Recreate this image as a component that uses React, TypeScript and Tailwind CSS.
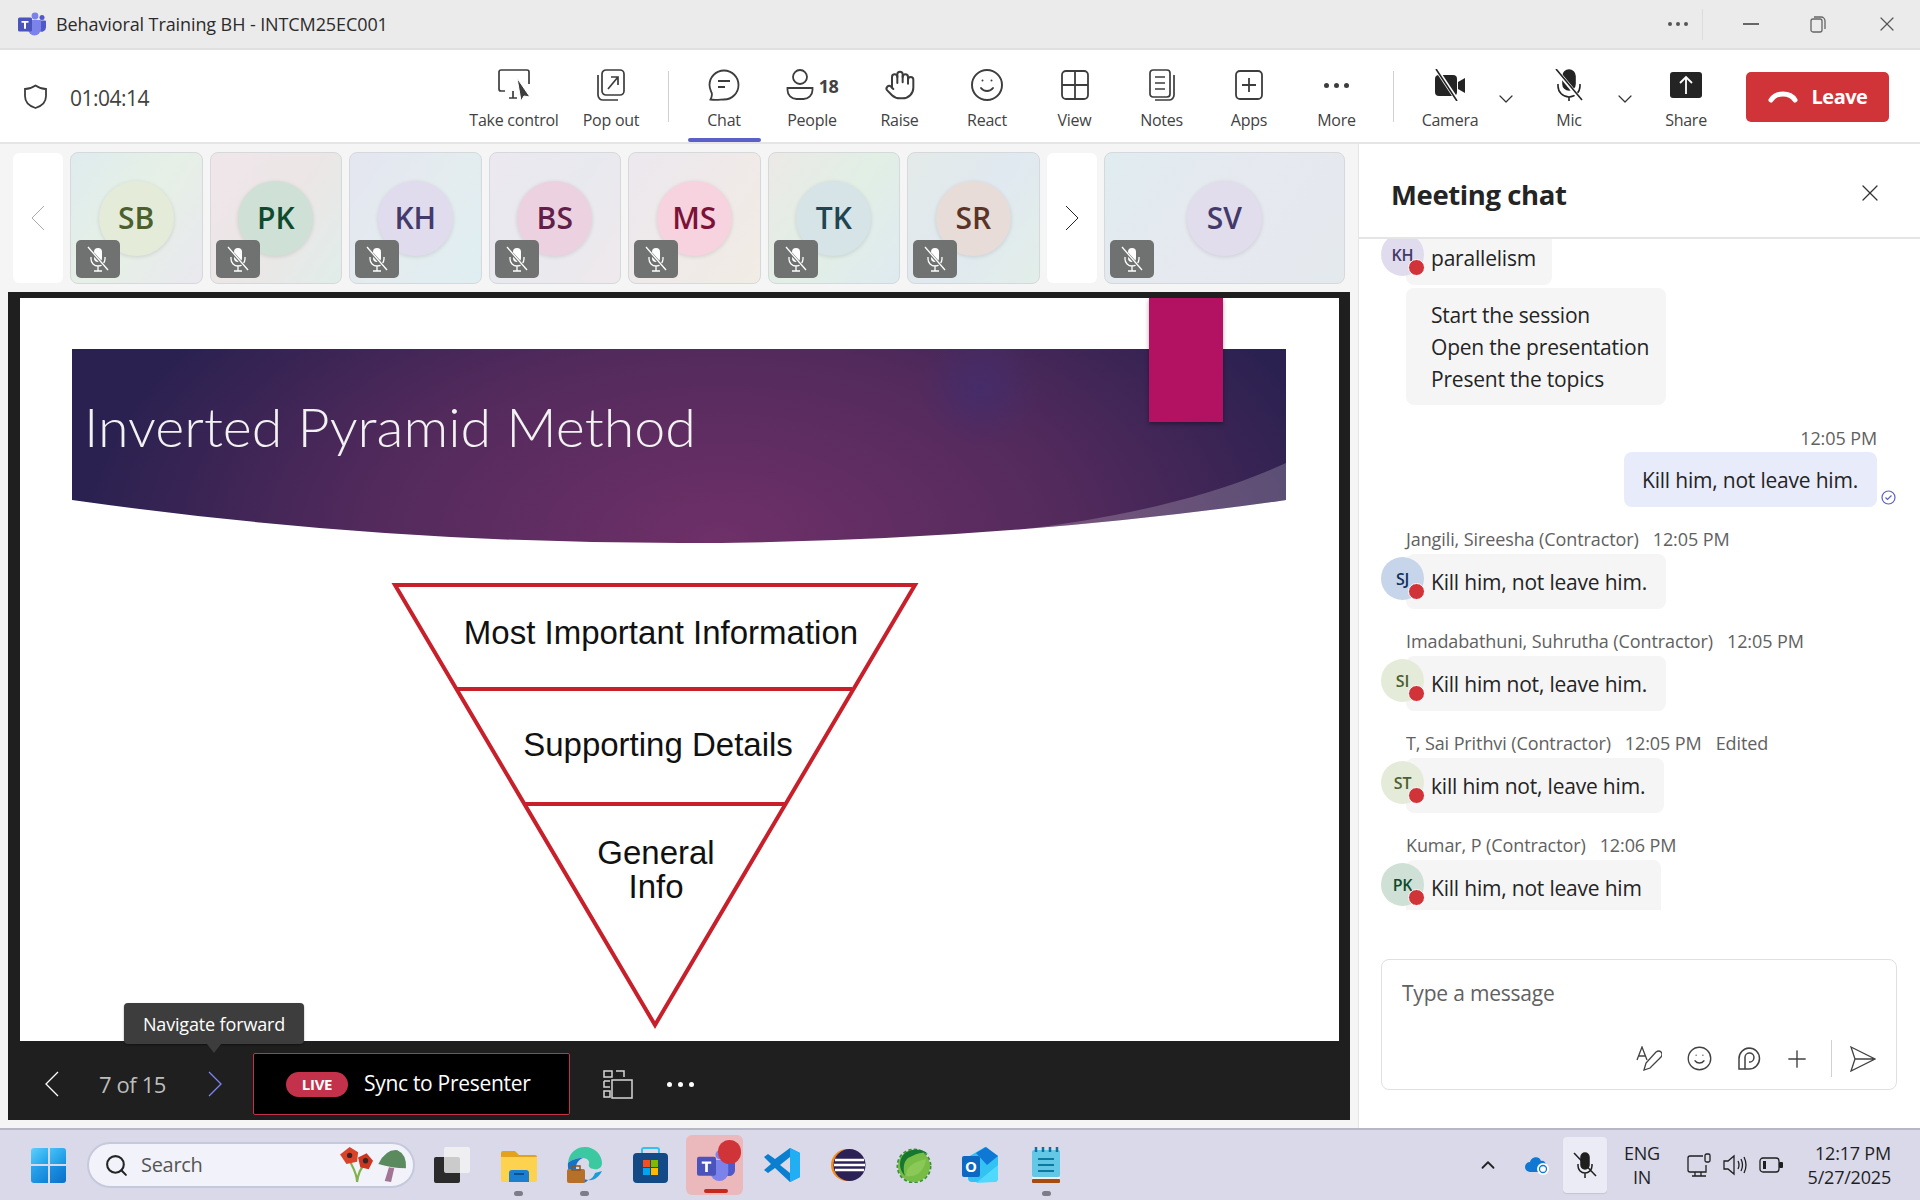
import React from "react";
import { Hand, Smile, X, ChevronDown, Search, ChevronUp, Plus } from "lucide-react";

const stroke = "#3d3d3d";

function Chevron({ dir, color, sw, className }: { dir: "left" | "right"; color: string; sw: number; className?: string }) {
  return (
    <svg className={className} width="14" height="26" viewBox="0 0 14 26" fill="none" stroke={color} strokeWidth={sw}>
      <path d={dir === "left" ? "M13 1L1 13l12 12" : "M1 1l12 12L1 25"} />
    </svg>
  );
}

function MuteIcon() {
  return (
    <svg width="24" height="26" viewBox="0 0 24 26" fill="none" stroke="#fff" strokeWidth="1.3">
      <rect x="8" y="2" width="8" height="14" rx="4" fill="#fff" stroke="none" />
      <path d="M5 11v2a7 7 0 0 0 14 0v-2M12 20v5M8 25h8" />
      <path d="M2 2l20 22" stroke="#6f7271" strokeWidth="3" />
      <path d="M2 1l20 23" />
    </svg>
  );
}

function Tile({ initials, bg, fg, avatar, wide }: { initials: string; bg: string; fg: string; avatar: string; wide?: boolean }) {
  return (
    <div className={`relative flex h-[132px] shrink-0 items-center justify-center rounded-[8px] border border-[#d6d9dc] ${wide ? "w-[241.5px]" : "w-[132.5px]"} ${bg}`}>
      <div className={`flex h-[75px] w-[75px] items-center justify-center rounded-full text-[30px] font-semibold leading-none shadow-[0_1px_4px_rgba(0,0,0,0.12)] ${avatar} ${fg}`}>
        {initials}
      </div>
      <div className="absolute bottom-[5px] left-[5px] flex h-[38px] w-[44px] items-center justify-center rounded-[5px] bg-[#6f7271]">
        <MuteIcon />
      </div>
    </div>
  );
}

function ToolButton({ label, width, children }: { label: string; width: string; children: React.ReactNode }) {
  return (
    <div className={`flex h-[92px] shrink-0 flex-col items-center ${width}`}>
      <div className="mt-[19px] flex h-[32px] items-center justify-center">{children}</div>
      <span className="mt-[8px] whitespace-nowrap text-[16px] leading-[22px] tracking-[-0.25px] text-[#424242]">{label}</span>
    </div>
  );
}

function Chat({ name, time, edited, initials, avatar, fg, width, children }: { name?: string; time?: string; edited?: boolean; initials?: string; avatar?: string; fg?: string; width: string; children: React.ReactNode }) {
  return (
    <div>
      {name && (
        <div className="mb-[3px] mt-[20px] flex h-[24px] items-center gap-[14px] whitespace-nowrap text-[18px] tracking-[-0.1px] text-[#616161]">
          <span>{name}</span>
          <span>{time}</span>
          {edited && <span>Edited</span>}
        </div>
      )}
      <div className={`relative rounded-[8px] bg-[#f5f5f5] py-[11.5px] pl-[25px] text-[21px] leading-[32px] tracking-[-0.2px] text-[#242424] ${width}`}>
        {initials && (
          <div className={`absolute -left-[25px] top-[3px] flex h-[43px] w-[43px] items-center justify-center rounded-full text-[16px] font-semibold ${avatar} ${fg}`}>
            {initials}
            <span className="absolute bottom-0 right-[-1px] h-[17px] w-[17px] rounded-full border border-white bg-[#d13438]" />
          </div>
        )}
        {children}
      </div>
    </div>
  );
}

function Slide() {
  return (
    <svg className="block h-[743px] w-[1319px]" viewBox="0 0 1319 743">
      <defs>
        <radialGradient id="banner" gradientUnits="userSpaceOnUse" cx="700" cy="440" r="640" gradientTransform="translate(0 0) scale(1 0.55)">
          <stop offset="0" stopColor="#6e3068" />
          <stop offset="0.55" stopColor="#532a5c" />
          <stop offset="1" stopColor="#2a2150" />
        </radialGradient>
        <radialGradient id="spot" cx="0.5" cy="0.5" r="0.5">
          <stop offset="0" stopColor="#452c69" />
          <stop offset="1" stopColor="#452c69" stopOpacity="0" />
        </radialGradient>
        <clipPath id="bannerClip">
          <path d="M52 51H1266V202Q659 288 52 202Z" />
        </clipPath>
      </defs>
      <path d="M52 51H1266V202Q659 288 52 202Z" fill="url(#banner)" />
      <g clipPath="url(#bannerClip)">
        <ellipse cx="960" cy="89" rx="60" ry="60" fill="url(#spot)" />
        <path d="M1266 165C1180 205 1060 228 944 237L960 290H1266Z" fill="#fff" fillOpacity="0.2" />
      </g>
      <rect x="1129" y="0" width="74" height="124" fill="#b31263" style={{ filter: "drop-shadow(0 2px 2px rgba(0,0,0,0.35))" }} />
      <text x="64" y="149" fontFamily="Lato, sans-serif" fontWeight="300" fontSize="54" fill="#f2f2f2" textLength="612" lengthAdjust="spacingAndGlyphs">Inverted Pyramid Method</text>
      <g fill="none" stroke="#c8202b" strokeWidth="4">
        <path d="M375 287H895L635 727Z" />
        <path d="M437 391H832M505 506H765" />
      </g>
      <g fontFamily="Liberation Sans, Arial, sans-serif" fontSize="33" fill="#111" textAnchor="middle">
        <text x="641" y="346">Most Important Information</text>
        <text x="638" y="458">Supporting Details</text>
        <text x="636" y="566">General</text>
        <text x="636" y="600">Info</text>
      </g>
    </svg>
  );
}

function Poppy() {
  return (
    <svg width="68" height="40" viewBox="0 0 64 36">
      <path d="M17 34C17 26 13 20 10 14M17 34C18 26 21 20 25 16" stroke="#7fb24a" strokeWidth="2" fill="none" />
      <path d="M1 8L10 1L18 6L17 15L7 17Z" fill="#d9432a" />
      <path d="M18 11L26 7L32 14L28 22L20 20Z" fill="#cc3522" />
      <circle cx="10" cy="9" r="2.5" fill="#3a2420" />
      <circle cx="25" cy="14" r="2.5" fill="#3a2420" />
      <path d="M37 17Q44 3 55 4Q64 8 63 21Q50 21 37 17Z" fill="#5b8a5e" />
      <path d="M47 20L43 33L49 34L52 21Z" fill="#a27594" />
    </svg>
  );
}

function TeamsLogo({ size, height }: { size: number; height: number }) {
  return (
    <svg width={size} height={height} viewBox="0 0 28 24">
      <circle cx="17" cy="4" r="3.4" fill="#7b83eb" />
      <circle cx="24" cy="5.4" r="2.5" fill="#5059c9" />
      <path d="M21 8.5h6a1 1 0 0 1 1 1v6a4.5 4.5 0 0 1-7 3.5z" fill="#5059c9" />
      <path d="M10 8h12a1 1 0 0 1 1 1v8a6.5 6.5 0 0 1-13 0z" fill="#7b83eb" />
      <rect x="0" y="5.5" width="14" height="14" rx="1.5" fill="#4b53bc" />
      <path d="M3.5 9h7v1.8H8v6H6v-6H3.5z" fill="#fff" />
    </svg>
  );
}

function Cell({ dot, children }: { dot?: boolean; children: React.ReactNode }) {
  return (
    <div className="relative flex h-[60px] w-[66px] shrink-0 items-center justify-center">
      {children}
      {dot && <span className="absolute bottom-[-1px] h-[5px] w-[9px] rounded-full bg-[#7d7d8a]" />}
    </div>
  );
}

export default function App() {
  return (
    <div className="flex h-[1200px] w-[1920px] flex-col overflow-hidden bg-white font-['Open_Sans',sans-serif] text-[#242424]">
      {/* title bar */}
      <div className="flex h-[50px] shrink-0 items-center border-b-2 border-[#e0e0e0] bg-[#ebebeb] pl-[18px]">
        <TeamsLogo size={28} height={24} />
        <span className="ml-[10px] text-[18px] tracking-[-0.1px] text-[#2b2b2b]">Behavioral Training BH - INTCM25EC001</span>
        <div className="ml-auto flex items-center">
          <span className="flex gap-[4px]">
            <i className="h-[4px] w-[4px] rounded-full bg-[#555]" />
            <i className="h-[4px] w-[4px] rounded-full bg-[#555]" />
            <i className="h-[4px] w-[4px] rounded-full bg-[#555]" />
          </span>
          <span className="ml-[14px] h-[31px] w-px bg-[#dcdcdc]" />
          <span className="ml-[40px] h-[2px] w-[16px] bg-[#666]" />
          <svg className="ml-[51px]" width="16" height="18" viewBox="0 0 16 18" fill="none" stroke="#666" strokeWidth="1.3">
            <rect x="1" y="4" width="11" height="13" rx="2" />
            <path d="M4 2h7a4 4 0 0 1 4 4v8" />
          </svg>
          <X className="ml-[49px] mr-[21px]" size={24} strokeWidth={1.2} color="#555" />
        </div>
      </div>

      {/* toolbar */}
      <div className="flex h-[94px] shrink-0 items-start border-b-2 border-[#e5e5e5] bg-white">
        <div className="flex h-[92px] w-[464px] shrink-0 items-center pl-[23px]">
          <svg width="25" height="25" viewBox="0 0 25 25" fill="none" stroke="#3d3d3d" strokeWidth="1.8">
            <path d="M12.5 1.5C9 4 6 5 2 5v7c0 6 4 10 10.500 12 6.500-2 10.500-6 10.500-12V5c-4 0-7-1-10.500-3.500z" />
          </svg>
          <span className="ml-[22px] mt-[5px] text-[21px] tracking-[-0.5px] text-[#424242]">01:04:14</span>
        </div>
        <ToolButton label="Take control" width="w-[100px]">
          <svg width="34" height="32" viewBox="0 0 34 32" fill="none" stroke={stroke} strokeWidth="1.7">
            <path d="M8 22H4a2 2 0 0 1-2-2V3a2 2 0 0 1 2-2h26a2 2 0 0 1 2 2v12" />
            <path d="M12 29h8M16 22v7" />
            <path d="M20 9l13 19-6-1-3 5z" fill={stroke} stroke="#fff" strokeWidth="1" />
          </svg>
        </ToolButton>
        <ToolButton label="Pop out" width="w-[94px]">
          <svg width="28" height="32" viewBox="0 0 28 32" fill="none" stroke={stroke} strokeWidth="1.7">
            <rect x="5" y="1" width="22" height="25" rx="4" />
            <path d="M1 6v20a5 5 0 0 0 5 5h15" />
            <path d="M11 20L21 8M14 8h7v8" />
          </svg>
        </ToolButton>
        <span className="ml-[10px] mr-[11px] mt-[21px] h-[51px] w-px shrink-0 bg-[#d1d1d1]" />
        <div className="relative">
          <ToolButton label="Chat" width="w-[88px]">
            <svg width="32" height="32" viewBox="0 0 32 32" fill="none" stroke={stroke} strokeWidth="1.8">
              <path d="M16 1.500c8 0 14.500 6.500 14.500 14.500S24 30.500 16 30.500c-3 0-9 1-13.500 0 1.500-3 2-5 1-7C2.500 21 1.500 19 1.500 16 1.500 8 8 1.500 16 1.500z" />
              <path d="M10 12h12M10 18h7" />
            </svg>
          </ToolButton>
          <span className="absolute bottom-[0px] left-[8px] h-[4px] w-[73px] rounded-full bg-[#5b5fc7]" />
        </div>
        <ToolButton label="People" width="w-[88px]">
          <div className="flex items-center">
            <svg width="28" height="32" viewBox="0 0 28 32" fill="none" stroke={stroke} strokeWidth="1.8">
              <circle cx="14" cy="8" r="7" />
              <path d="M1.500 19h25v2a9 9 0 0 1-9 9h-7a9 9 0 0 1-9-9z" />
            </svg>
            <span className="ml-[5px] mt-[2px] text-[18px] font-bold tracking-[-0.5px] text-[#424242]">18</span>
          </div>
        </ToolButton>
        <ToolButton label="Raise" width="w-[87px]">
          <Hand size={32} strokeWidth={1.5} color={stroke} />
        </ToolButton>
        <ToolButton label="React" width="w-[88px]">
          <Smile size={36} strokeWidth={1.3} color={stroke} />
        </ToolButton>
        <ToolButton label="View" width="w-[87px]">
          <svg width="28" height="30" viewBox="0 0 28 30" fill="none" stroke={stroke} strokeWidth="1.8">
            <rect x="1" y="1" width="26" height="28" rx="4" />
            <path d="M14 1v28M1 15h26" />
          </svg>
        </ToolButton>
        <ToolButton label="Notes" width="w-[87px]">
          <svg width="26" height="32" viewBox="0 0 26 32" fill="none" stroke={stroke} strokeWidth="1.700">
            <rect x="1" y="1" width="20" height="27" rx="3" />
            <path d="M6 8h10M6 14h10M6 20h10" />
            <path d="M25 6v20a5 5 0 0 1-5 5H6" />
          </svg>
        </ToolButton>
        <ToolButton label="Apps" width="w-[88px]">
          <svg width="28" height="30" viewBox="0 0 28 30" fill="none" stroke={stroke} strokeWidth="1.8">
            <rect x="1" y="1" width="26" height="28" rx="4" />
            <path d="M14 8v14M7 15h14" />
          </svg>
        </ToolButton>
        <ToolButton label="More" width="w-[87px]">
          <span className="flex gap-[5px]">
            <i className="h-[5px] w-[5px] rounded-full bg-[#3d3d3d]" />
            <i className="h-[5px] w-[5px] rounded-full bg-[#3d3d3d]" />
            <i className="h-[5px] w-[5px] rounded-full bg-[#3d3d3d]" />
          </span>
        </ToolButton>
        <span className="ml-[13px] mt-[21px] h-[51px] w-px shrink-0 bg-[#d1d1d1]" />
        <ToolButton label="Camera" width="w-[112px]">
          <svg width="32" height="32" viewBox="0 0 32 32">
            <rect x="1" y="6" width="22" height="21" rx="4" fill="#242424" />
            <path d="M24 13l7-4v15l-7-4z" fill="#242424" />
            <path d="M3 1l20 30" stroke="#fff" strokeWidth="4" />
            <path d="M2 0l21 32" stroke="#242424" strokeWidth="1.600" />
          </svg>
        </ToolButton>
        <ChevronDown className="-ml-[12px] mt-[37px] shrink-0" size={24} strokeWidth={1.2} color="#333" />
        <div className="ml-[7px] shrink-0">
          <ToolButton label="Mic" width="w-[88px]">
            <svg width="32" height="32" viewBox="0 0 32 32" fill="none" stroke="#242424" strokeWidth="1.600">
              <rect x="10" y="1" width="12" height="20" rx="6" fill="#242424" />
              <path d="M5 15v2a11 11 0 0 0 22 0v-2M16 28v4" />
              <path d="M4 2l24 29" stroke="#fff" strokeWidth="4" />
              <path d="M3 0l26 31" />
            </svg>
          </ToolButton>
        </div>
        <ChevronDown className="mt-[37px] shrink-0" size={24} strokeWidth={1.2} color="#333" />
        <div className="ml-[4px] shrink-0">
          <ToolButton label="Share" width="w-[90px]">
            <svg width="32" height="26" viewBox="0 0 32 26">
              <rect width="32" height="26" rx="3" fill="#242424" />
              <path d="M16 22V6M10 11l6-6 6 6" stroke="#fff" strokeWidth="1.800" fill="none" />
            </svg>
          </ToolButton>
        </div>
        <div className="ml-[15px] mt-[22px] flex h-[50px] w-[143px] shrink-0 items-center justify-center gap-[14px] rounded-[5px] bg-[#d13438]">
          <svg width="30" height="12" viewBox="0 0 30 12" fill="none" stroke="#fff" strokeWidth="5" strokeLinecap="round">
            <path d="M3 9C8 1 22 1 27 9" />
          </svg>
          <span className="text-[20px] font-bold tracking-[-0.5px] text-white">Leave</span>
        </div>
      </div>

      {/* body */}
      <div className="flex min-h-0 flex-1">
        <div className="flex w-[1358px] shrink-0 flex-col bg-[#f5f5f5] pl-[8px] pt-[8px]">
          <div className="flex items-center gap-[7px] pl-[5px]">
            <div className="flex h-[130px] w-[50px] shrink-0 items-center justify-center rounded-[6px] bg-white">
              <Chevron dir="left" color="#a8a8a8" sw={1} />
            </div>
            <Tile initials="SB" bg="bg-[linear-gradient(125deg,#dfecee,#e6f0e6,#e9e8ef)]" avatar="bg-[#e5ebd9]" fg="text-[#4b5f2f]" />
            <Tile initials="PK" bg="bg-[linear-gradient(125deg,#efe6ea,#ece6e6,#e0ede9)]" avatar="bg-[#cfe0d6]" fg="text-[#0f4a2e]" />
            <Tile initials="KH" bg="bg-[linear-gradient(125deg,#e4e5f0,#e4ecef,#dfeef2)]" avatar="bg-[#e1dced]" fg="text-[#433a6b]" />
            <Tile initials="BS" bg="bg-[linear-gradient(125deg,#ece8f0,#e8e9ef,#efe9ec)]" avatar="bg-[#ecd2e0]" fg="text-[#611f49]" />
            <Tile initials="MS" bg="bg-[linear-gradient(125deg,#ece8ee,#efe9e9,#f1ece4)]" avatar="bg-[#f6d3de]" fg="text-[#7c1238]" />
            <Tile initials="TK" bg="bg-[linear-gradient(125deg,#ece9e6,#e1efe5,#dfeaf0)]" avatar="bg-[#d6e3e7]" fg="text-[#1e4550]" />
            <Tile initials="SR" bg="bg-[linear-gradient(125deg,#e4eae8,#e0e9f0,#e2eee9)]" avatar="bg-[#e8dcd8]" fg="text-[#5a3426]" />
            <div className="flex h-[130px] w-[50px] shrink-0 items-center justify-center rounded-[6px] bg-white">
              <Chevron dir="right" color="#242424" sw={1} />
            </div>
            <Tile wide initials="SV" bg="bg-[linear-gradient(125deg,#e0ecf0,#e6e9ef,#e4e9ee)]" avatar="bg-[#e2dded]" fg="text-[#433a6b]" />
          </div>

          <div className="relative mt-[8px] h-[828px] w-[1342px] bg-[#1f1f1f] pt-[6px]">
            <div className="ml-[12px] w-[1319px] bg-white">
              <Slide />
            </div>
            <div className="flex h-[79px] items-center pl-[37px] pt-[7px]">
              <Chevron dir="left" color="#fff" sw={1.3} />
              <span className="ml-[40px] w-[70px] whitespace-nowrap text-[22px] tracking-[-0.4px] text-[#bdbdbd]">7 of 15</span>
              <Chevron className="ml-[39px]" dir="right" color="#7f85f5" sw={1.3} />
              <div className="ml-[31px] flex h-[62px] w-[317px] shrink-0 items-center rounded-[2px] border border-[#c4314b] bg-black pl-[32px]">
                <span className="flex h-[25px] w-[62px] items-center justify-center rounded-full bg-[#c4314b] text-[15px] font-bold tracking-[-0.3px] text-white">LIVE</span>
                <span className="ml-[16px] text-[21px] tracking-[-0.3px] text-white">Sync to Presenter</span>
              </div>
              <svg className="ml-[33px]" width="30" height="29" viewBox="0 0 30 29" fill="none" stroke="#d6d6d6" strokeWidth="1.500">
                <rect x="9" y="10" width="20" height="18" />
                <path d="M1 1h8v6H1zM13 1h8v6M1 11h6M1 11v6h6M1 21h6v6H1z" />
              </svg>
              <span className="ml-[34px] flex gap-[6px]">
                <i className="h-[5px] w-[5px] rounded-full bg-white" />
                <i className="h-[5px] w-[5px] rounded-full bg-white" />
                <i className="h-[5px] w-[5px] rounded-full bg-white" />
              </span>
            </div>
            <div className="absolute left-[116px] top-[711px] flex h-[41px] w-[180px] items-center justify-center rounded-[4px] bg-[#3d3d3d] pt-[1px] text-[18px] tracking-[-0.15px] text-white shadow-[0_1px_2px_rgba(0,0,0,0.4)]">
              Navigate forward
              <span className="absolute -bottom-[9px] left-[83px] h-0 w-0 border-x-[7px] border-t-[9px] border-x-transparent border-t-[#3d3d3d]" />
            </div>
          </div>
        </div>

        {/* chat panel */}
        <div className="flex w-[562px] shrink-0 flex-col border-l border-[#e5e5e5] bg-white">
          <div className="flex h-[95px] shrink-0 items-start justify-between border-b-2 border-[#e5e5e5] pl-[32px] pr-[36px] pt-[31px]">
            <span className="text-[27.5px] font-bold leading-[40px] tracking-[-0.4px] text-[#242424]">Meeting chat</span>
            <X className="mt-[4px]" size={28} strokeWidth={1.1} color="#333" />
          </div>
          <div className="h-[671px] shrink-0 overflow-hidden pl-[47px]">
            <div className="-mt-[9px]">
              <Chat initials="KH" avatar="bg-[#e1dced]" fg="text-[#433a6b]" width="w-[146px]">parallelism</Chat>
            </div>
            <div className="mt-[3px] h-[117px] w-[260px] rounded-[8px] bg-[#f5f5f5] py-[10.5px] pl-[25px] text-[21px] leading-[32px] tracking-[-0.2px]">
              <p>Start the session</p>
              <p>Open the presentation</p>
              <p>Present the topics</p>
            </div>
            <div className="mr-[43px] mt-[20px] flex flex-col items-end">
              <span className="mb-[3px] h-[24px] text-[18px] tracking-[-0.1px] text-[#616161]">12:05 PM</span>
              <div className="relative w-[253px] rounded-[8px] bg-[#e8ebfa] py-[11.5px] pl-[18px] text-[21px] leading-[32px] tracking-[-0.2px]">
                Kill him, not leave him.
                <svg className="absolute -right-[19px] bottom-[2px]" width="15" height="15" viewBox="0 0 15 15" fill="none" stroke="#5b5fc7" strokeWidth="1.200">
                  <circle cx="7.5" cy="7.5" r="6.500" />
                  <path d="M4.500 7.500l2 2 4-4" />
                </svg>
              </div>
            </div>
            <Chat name="Jangili, Sireesha (Contractor)" time="12:05 PM" initials="SJ" avatar="bg-[#c7d5ea]" fg="text-[#12305c]" width="w-[260px]">Kill him, not leave him.</Chat>
            <Chat name="Imadabathuni, Suhrutha (Contractor)" time="12:05 PM" initials="SI" avatar="bg-[#e5ebd9]" fg="text-[#4b5f2f]" width="w-[260px]">Kill him not, leave him.</Chat>
            <Chat name="T, Sai Prithvi (Contractor)" time="12:05 PM" edited initials="ST" avatar="bg-[#e5ebd9]" fg="text-[#4b5f2f]" width="w-[258px]">kill him not, leave him.</Chat>
            <Chat name="Kumar, P (Contractor)" time="12:06 PM" initials="PK" avatar="bg-[#cfe0d6]" fg="text-[#0f4a2e]" width="w-[255px]">
              <p>Kill him, not leave him</p>
              <p>kill him not, leave him</p>
            </Chat>
          </div>
          <div className="ml-[22px] mt-[49px] h-[131px] w-[516px] shrink-0 rounded-[8px] border border-[#e0e0e0] bg-white pl-[20px] pt-[19px]">
            <div className="text-[21px] leading-[28px] tracking-[-0.2px] text-[#616161]">Type a message</div>
            <div className="mt-[33px] flex items-center pl-[234px]">
              <svg width="26" height="26" viewBox="0 0 26 26" fill="none" stroke="#424242" strokeWidth="1.300">
                <path d="M1 14L6 1l5 13M3 10h6" />
                <path d="M8 24l2-7L20 6q3-2 5 0t0 5L14 22z" />
              </svg>
              <Smile className="ml-[24px]" size={27} strokeWidth={1.2} color="#424242" />
              <svg className="ml-[24px]" width="24" height="25" viewBox="0 0 24 25" fill="none" stroke="#424242" strokeWidth="1.500">
                <path d="M12 2a10.500 10.500 0 0 1 0 21H2v-10A10.500 10.500 0 0 1 12 2z" />
                <path d="M8 23V11a4.500 4.500 0 1 1 4 5" />
              </svg>
              <Plus className="ml-[22px]" size={28} strokeWidth={1.2} color="#424242" />
              <span className="ml-[20px] h-[37px] w-px bg-[#d1d1d1]" />
              <svg className="ml-[18px]" width="26" height="26" viewBox="0 0 26 26" fill="none" stroke="#424242" strokeWidth="1.300">
                <path d="M1 1l24 12L1 25l4-12zM5 13h20" />
              </svg>
            </div>
          </div>
        </div>
      </div>

      {/* taskbar */}
      <div className="flex h-[72px] shrink-0 items-center border-t-2 border-[#b6b6c4] bg-[#d9d9ea]">
        <div className="ml-[31px] grid h-[35px] w-[35px] shrink-0 grid-cols-2 gap-[2px] overflow-hidden rounded-[3px]">
          <i className="bg-[linear-gradient(135deg,#5fd0fb,#1b9fe8)]" />
          <i className="bg-[linear-gradient(135deg,#48c2f7,#1592e0)]" />
          <i className="bg-[linear-gradient(135deg,#2fa8ee,#0f80d8)]" />
          <i className="bg-[linear-gradient(135deg,#1d93e4,#0a6fc9)]" />
        </div>
        <div className="ml-[21px] flex h-[46px] w-[328px] shrink-0 items-center rounded-full border-2 border-[#c6c9dc] bg-[#f2f3fa] pl-[15px]">
          <Search size={25} strokeWidth={2} color="#242424" />
          <span className="ml-[12px] text-[20px] tracking-[-0.3px] text-[#555]">Search</span>
          <span className="ml-auto mr-[6px]"><Poppy /></span>
        </div>
        <div className="ml-[4px] flex">
          <Cell>
            <div className="relative h-[36px] w-[36px]">
              <span className="absolute bottom-0 left-0 h-[26px] w-[26px] rounded-[2px] bg-[#2b2b2b]" />
              <span className="absolute right-0 top-0 h-[26px] w-[26px] rounded-[2px] bg-[#f4f4f4]/80" />
            </div>
          </Cell>
          <Cell dot>
            <svg width="37" height="34" viewBox="0 0 37 34">
              <path d="M1 5a2 2 0 0 1 2-2h12l4 4h16a2 2 0 0 1 2 2v3H1z" fill="#e3a21c" />
              <path d="M1 9h36v23a2 2 0 0 1-2 2H3a2 2 0 0 1-2-2z" fill="#fcd24e" />
              <path d="M9 34V25a3 3 0 0 1 3-3h14a3 3 0 0 1 3 3v9z" fill="#1a7fd1" />
              <rect x="14" y="25" width="10" height="2" fill="#0b4f8f" />
            </svg>
          </Cell>
          <Cell dot>
            <svg width="36" height="36" viewBox="0 0 36 36">
              <path d="M2 16C3 6 10 0 19 0c10 0 17 8 17 16 0 5-4 7-8 6-4 0-6-3-5-5 1-3-2-6-6-6-6 0-12 2-15 5z" fill="#3cc8a0" />
              <path d="M2 16c3-3 9-5 15-5-5 2-7 6-7 10 0 6 5 11 12 12-1 1-3 3-6 3C8 36 1 27 2 16z" fill="#1673c5" />
              <path d="M36 24c-3 6-8 10-14 9 4-1 6-4 7-7z" fill="#1d9bd6" />
              <rect x="1" y="22" width="18" height="14" rx="2" fill="#b5702a" />
              <rect x="6" y="19" width="8" height="4" fill="none" stroke="#8a5320" strokeWidth="1.500" />
            </svg>
          </Cell>
          <Cell>
            <svg width="35" height="36" viewBox="0 0 35 36">
              <path d="M9 8V3q0-2 2-2h13q2 0 2 2v5" fill="none" stroke="#36bff0" strokeWidth="2" />
              <rect y="6" width="35" height="30" rx="4" fill="#134a86" />
              <rect x="10" y="13" width="7" height="7" fill="#f25022" />
              <rect x="18" y="13" width="7" height="7" fill="#7fba00" />
              <rect x="10" y="21" width="7" height="7" fill="#00a4ef" />
              <rect x="18" y="21" width="7" height="7" fill="#ffb900" />
            </svg>
          </Cell>
          <div className="relative flex h-[60px] w-[66px] shrink-0 items-center justify-center">
            <div className="absolute inset-y-0 left-[3px] w-[57px] rounded-[6px] bg-[#ebb9bb]" />
            <div className="relative"><TeamsLogo size={38} height={33} /></div>
            <span className="absolute left-[35px] top-[5px] h-[24px] w-[23px] rounded-full bg-[#d13438]" />
            <span className="absolute bottom-[2px] left-[21px] h-[4px] w-[24px] rounded-full bg-[#c42b1c]" />
          </div>
          <Cell>
            <svg width="36" height="36" viewBox="0 0 36 36">
              <path d="M26 1l10 5v24l-10 5-15-14-7 5-4-3 7-6-7-7 4-3 7 5z" fill="#0a7fd0" />
              <path d="M26 1l10 5v24l-10 5z" fill="#22aef2" />
              <path d="M26 10v16l-10-8z" fill="#d9d9ea" />
            </svg>
          </Cell>
          <Cell>
            <svg width="36" height="36" viewBox="0 0 36 36">
              <circle cx="17" cy="18" r="16" fill="#f28c1e" />
              <circle cx="19.500" cy="18" r="16" fill="#2c2255" />
              <path d="M5 13h29M4 18h31M5 23h29" stroke="#fff" strokeWidth="2.500" />
            </svg>
          </Cell>
          <Cell>
            <svg width="36" height="36" viewBox="0 0 36 36">
              <circle cx="18" cy="19" r="15" fill="none" stroke="#3c8f3a" strokeWidth="5" strokeDasharray="3 2" />
              <circle cx="18" cy="19" r="16" fill="#77bc45" />
              <path d="M32 7C26 4 20 7 12 11 7 15 7 23 9 29 3 23 2 13 8 7 14 1 27 1 32 7z" fill="#16782f" />
              <path d="M10 29c0-10 8-14 20-17-1 11-9 19-20 17z" fill="#8ac858" />
            </svg>
          </Cell>
          <Cell>
            <svg width="36" height="36" viewBox="0 0 36 36">
              <path d="M6 10L23 0l13 9v22a4 4 0 0 1-4 4H10a4 4 0 0 1-4-4z" fill="#33c2f1" />
              <path d="M14 6l10-6 12 9-11 9z" fill="#0f78d4" />
              <path d="M14 36L36 18v13a4 4 0 0 1-4 4z" fill="#50d9ff" />
              <rect y="9" width="18" height="21" rx="2" fill="#0c68c0" />
              <text x="9" y="25" textAnchor="middle" fontFamily="Open Sans, sans-serif" fontWeight="700" fontSize="15" fill="#fff">O</text>
            </svg>
          </Cell>
          <Cell dot>
            <svg width="28" height="36" viewBox="0 0 28 36">
              <rect y="3" width="28" height="27" rx="2" fill="#62c8e6" />
              <rect y="30" width="28" height="2" fill="#f0f0f0" />
              <rect y="32" width="28" height="4" rx="1" fill="#a84b10" />
              <path d="M4 0v5M11 0v5M18 0v5M25 0v5" stroke="#0f6f9f" strokeWidth="2.500" />
              <path d="M6 12h16M6 18h16M6 24h16" stroke="#0c7aa0" strokeWidth="2" />
            </svg>
          </Cell>
        </div>
        <ChevronUp className="ml-[398px] shrink-0" size={22} strokeWidth={2} color="#242424" />
        <svg className="ml-[26px] shrink-0" width="24" height="20" viewBox="0 0 24 20">
          <path d="M5 17a5 5 0 0 1 0-10c1-5 9-7 11-1 4-1 6 3 5 11z" fill="#0f78d4" />
          <circle cx="18" cy="14" r="6" fill="#fff" />
          <circle cx="18" cy="14" r="3.500" fill="none" stroke="#0f78d4" strokeWidth="1.300" />
        </svg>
        <div className="ml-[14px] flex h-[56px] w-[44px] shrink-0 items-center justify-center rounded-[4px] bg-[#ebebf5] shadow-[0_1px_1px_rgba(0,0,0,0.1)]">
          <svg width="24" height="26" viewBox="0 0 24 26" fill="none" stroke="#1f1f1f" strokeWidth="1.500">
            <rect x="8" y="1" width="8" height="16" rx="4" fill="#1f1f1f" />
            <path d="M5 12v2a7 7 0 0 0 14 0v-2M12 21v5" />
            <path d="M1 1l22 23" />
          </svg>
        </div>
        <div className="w-[70px] shrink-0 text-center text-[18px] leading-[24px] tracking-[-0.2px] text-[#1f1f1f]">
          <div>ENG</div>
          <div>IN</div>
        </div>
        <svg className="ml-[10px] shrink-0" width="24" height="24" viewBox="0 0 24 24" fill="none" stroke="#1f1f1f" strokeWidth="1.300">
          <path d="M16 3H3a2 2 0 0 0-2 2v12a2 2 0 0 0 2 2h16v-7M5 23h14M8 19v4M14 19v4" />
          <rect x="18" y="1" width="5" height="8" rx="1.500" />
        </svg>
        <svg className="ml-[12px] shrink-0" width="24" height="24" viewBox="0 0 24 24" fill="none" stroke="#1f1f1f" strokeWidth="1.300">
          <path d="M1 8v8h4l6 5V3L5 8zM15 8q2 4 0 8M18 6q3 6 0 12M21 4q4 8 0 16" />
        </svg>
        <svg className="ml-[12px] shrink-0" width="24" height="16" viewBox="0 0 24 16" fill="none" stroke="#1f1f1f" strokeWidth="1.300">
          <rect x="1" y="1" width="19" height="14" rx="3" />
          <rect x="4" y="4" width="3" height="8" fill="#1f1f1f" stroke="none" />
          <rect x="20" y="5" width="4" height="6" rx="1" fill="#1f1f1f" stroke="none" />
        </svg>
        <div className="flex-1 pr-[29px] text-right text-[18px] leading-[24px] tracking-[-0.2px] text-[#1f1f1f]">
          <div>12:17 PM</div>
          <div>5/27/2025</div>
        </div>
      </div>
    </div>
  );
}
